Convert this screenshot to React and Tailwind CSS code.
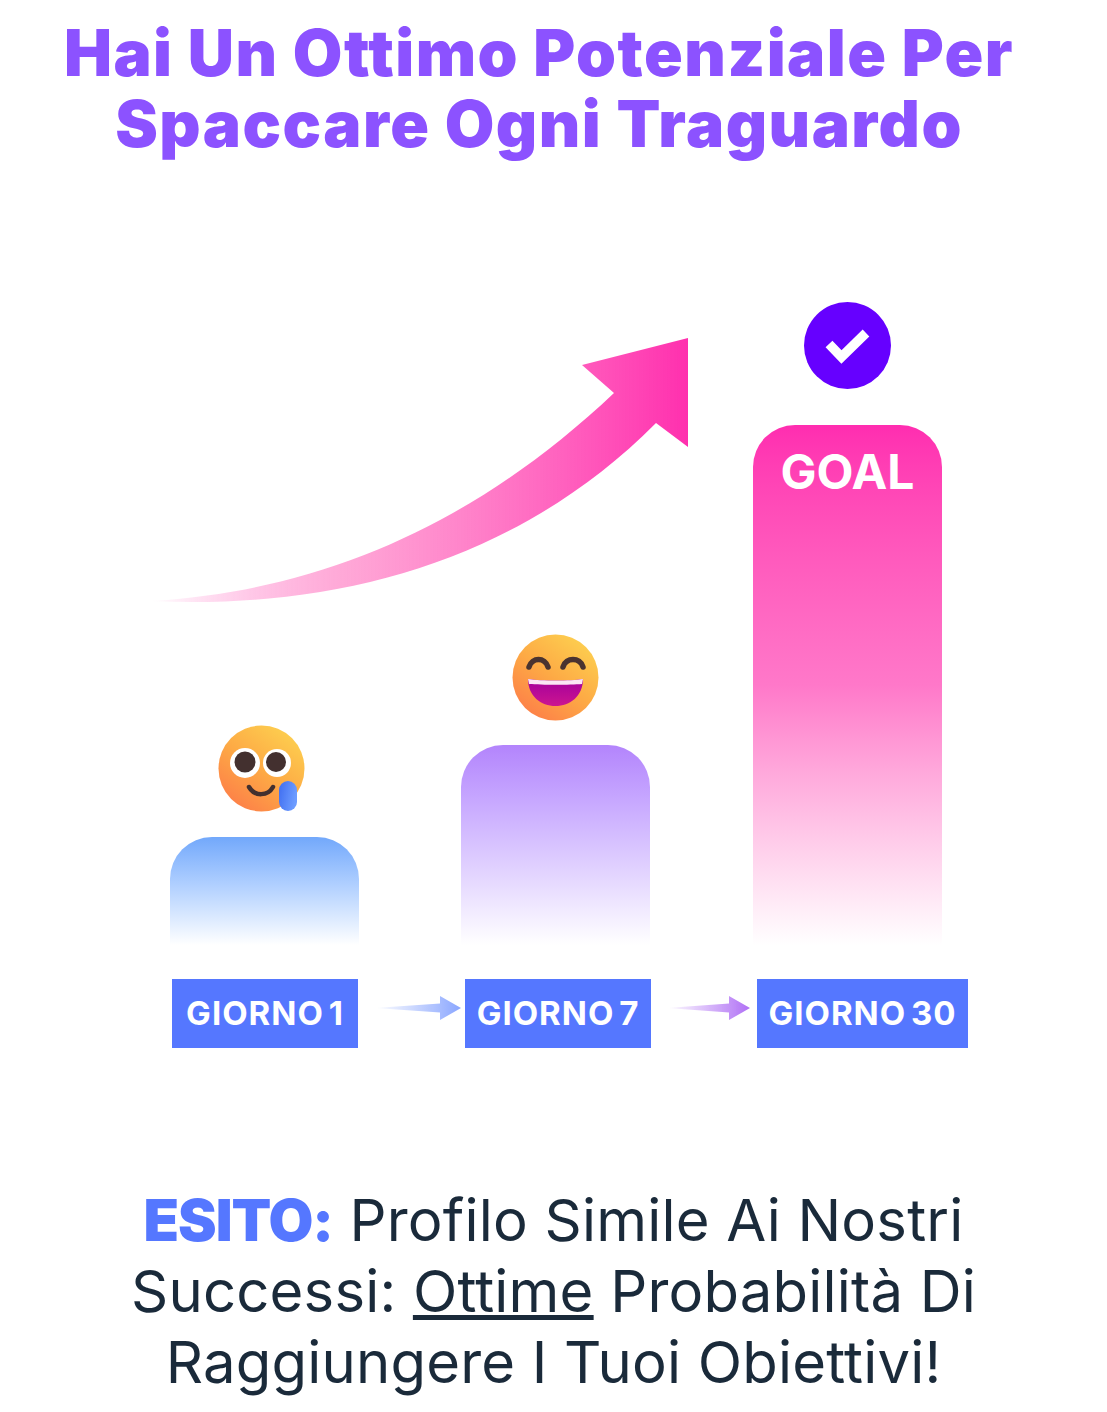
const barClass = "w-[189px] rounded-t-[42px] bg-linear-to-b to-white";

const LaughEmoji = () => (
  <svg width="87" height="87" viewBox="0 0 87 87" className="blur-[0.6px]">
    <defs>
      <linearGradient id="faceB" x1="0.85" y1="0.15" x2="0.25" y2="0.95">
        <stop offset="0" stopColor="#fdcb4e" />
        <stop offset="0.5" stopColor="#fdaa45" />
        <stop offset="1" stopColor="#fd8248" />
      </linearGradient>
      <linearGradient id="mouth" x1="0" y1="0" x2="0" y2="1">
        <stop offset="0" stopColor="#a4009c" />
        <stop offset="1" stopColor="#cc1590" />
      </linearGradient>
    </defs>
    <circle cx="43.5" cy="43.5" r="43" fill="url(#faceB)" />
    <path d="M17 33 C20 23 33 23 36 33" fill="none" stroke="#4a3330" strokeWidth="5.5" strokeLinecap="round" />
    <path d="M51 33 C54 23 68 23 71 33" fill="none" stroke="#4a3330" strokeWidth="5.5" strokeLinecap="round" />
    <path d="M16 45 C30 47 58 47 71 45 C71 62 58 72 43.5 72 C29 72 16 62 16 45 Z" fill="url(#mouth)" />
    <path d="M16 45 C30 47 58 47 71 45 L70 50 C58 51 30 51 17 50 Z" fill="#fbe6f4" />
  </svg>
);

const TearEmoji = () => (
  <svg width="87" height="87" viewBox="0 0 87 87" className="blur-[0.6px]">
    <defs>
      <linearGradient id="faceA" x1="0.85" y1="0.15" x2="0.25" y2="0.95">
        <stop offset="0" stopColor="#fdcb4e" />
        <stop offset="0.5" stopColor="#fdaa45" />
        <stop offset="1" stopColor="#fd8248" />
      </linearGradient>
      <linearGradient id="tear" x1="0" y1="0" x2="1" y2="0.3">
        <stop offset="0" stopColor="#3f6df0" />
        <stop offset="1" stopColor="#6d9cff" />
      </linearGradient>
    </defs>
    <circle cx="43.5" cy="43.5" r="43" fill="url(#faceA)" />
    <circle cx="27" cy="38" r="15" fill="#fff" />
    <circle cx="59" cy="38" r="14" fill="#fff" />
    <circle cx="27" cy="37" r="10.5" fill="#43302f" />
    <circle cx="58" cy="37" r="10" fill="#43302f" />
    <path d="M31 62 C37 72 50 71 55 62" fill="none" stroke="#43302f" strokeWidth="4.5" strokeLinecap="round" />
    <rect x="61" y="56" width="18" height="30" rx="9" fill="url(#tear)" />
  </svg>
);

const CheckBadge = () => (
  <svg width="87" height="87" viewBox="0 0 87 87" className="blur-[0.5px]">
    <circle cx="43.5" cy="43.5" r="43.5" fill="#6600ff" />
    <path d="M25 42 L37.5 55 L62 31" fill="none" stroke="#fff" strokeWidth="9.5" strokeLinejoin="miter" />
  </svg>
);

const GrowthArrow = () => (
  <svg width="560" height="280" viewBox="140 330 560 280" className="absolute left-[140px] top-[28px] blur-[0.5px]">
    <defs>
      <linearGradient id="arrowFill" gradientUnits="userSpaceOnUse" x1="150" y1="0" x2="689" y2="0">
        <stop offset="0" stopColor="#ff33ad" stopOpacity="0" />
        <stop offset="0.35" stopColor="#ff70bd" stopOpacity="0.6" />
        <stop offset="1" stopColor="#ff2fae" />
      </linearGradient>
    </defs>
    <path
      d="M150 601 C340 590 490 510 614 393 L582 365 L688 338 L688 447 L656 423 C520 560 340 610 150 601 Z"
      fill="url(#arrowFill)"
    />
  </svg>
);

const SmallArrow = ({ id, color, width, className }) => (
  <svg width={width} height="24" viewBox={`0 0 ${width} 24`} className={`blur-[0.5px] ${className}`}>
    <defs>
      <linearGradient id={id} x1="0" y1="0" x2="1" y2="0">
        <stop offset="0" stopColor={color} stopOpacity="0" />
        <stop offset="1" stopColor={color} />
      </linearGradient>
    </defs>
    <path d={`M0 12 L${width - 21} 7.5 L${width - 21} 0 L${width} 12 L${width - 21} 24 L${width - 21} 16.5 Z`} fill={`url(#${id})`} />
  </svg>
);

const DayLabel = ({ children, className }) => (
  <div className={`flex h-[69px] items-center justify-center bg-[#5577ff] text-[33px] font-bold tracking-[1px] text-white [word-spacing:-4px] ${className}`}>
    {children}
  </div>
);

export default function App() {
  return (
    <div className="h-[1412px] w-[1107px] overflow-hidden bg-white font-['Inter',sans-serif]">
      <h1 className="pr-[29px] pt-[17px] text-center text-[64px] leading-[71px] font-black tracking-[1.5px] text-[#8c52ff]">
        Hai Un Ottimo Potenziale Per
        <br />
        Spaccare Ogni Traguardo
      </h1>

      <div className="relative mt-[143px] flex h-[643px] items-end gap-[102px] pl-[170px]">
        <GrowthArrow />
        <div className="flex flex-col items-center">
          <div className="mb-[25px] mr-[6px]"><TearEmoji /></div>
          <div className={`${barClass} h-[108px] from-[#72a8fb]`} />
        </div>
        <div className="flex flex-col items-center">
          <div className="mb-[24px]"><LaughEmoji /></div>
          <div className={`${barClass} h-[200px] from-[#b384fc]`} />
        </div>
        <div className="ml-[1px] flex flex-col items-center">
          <div className="mb-[36px]"><CheckBadge /></div>
          <div className={`${barClass} flex h-[520px] justify-center from-[#ff2db0] via-[#ff78c9]`}>
            <span className="mt-[17px] text-[48px] leading-[60px] font-bold text-white">GOAL</span>
          </div>
        </div>
      </div>

      <div className="mt-[34px] flex items-center pl-[172px]">
        <DayLabel className="w-[186px]">GIORNO 1</DayLabel>
        <SmallArrow id="arrowBlue" color="#8aa6ff" width={86} className="mb-[11px] ml-[17px] mr-[4px]" />
        <DayLabel className="w-[186px]">GIORNO 7</DayLabel>
        <SmallArrow id="arrowPurple" color="#b070f5" width={83} className="mb-[11px] ml-[16px] mr-[7px]" />
        <DayLabel className="w-[211px]">GIORNO 30</DayLabel>
      </div>

      <p className="mt-[137px] text-center text-[58px] leading-[71px] tracking-[0.2px] text-[#1a2a3a]">
        <strong className="font-black tracking-[-1px] text-[#5577ff]">ESITO:</strong> Profilo Simile Ai Nostri
        <br />
        Successi: <span className="underline">Ottime</span> Probabilità Di
        <br />
        Raggiungere I Tuoi Obiettivi!
      </p>
    </div>
  );
}
